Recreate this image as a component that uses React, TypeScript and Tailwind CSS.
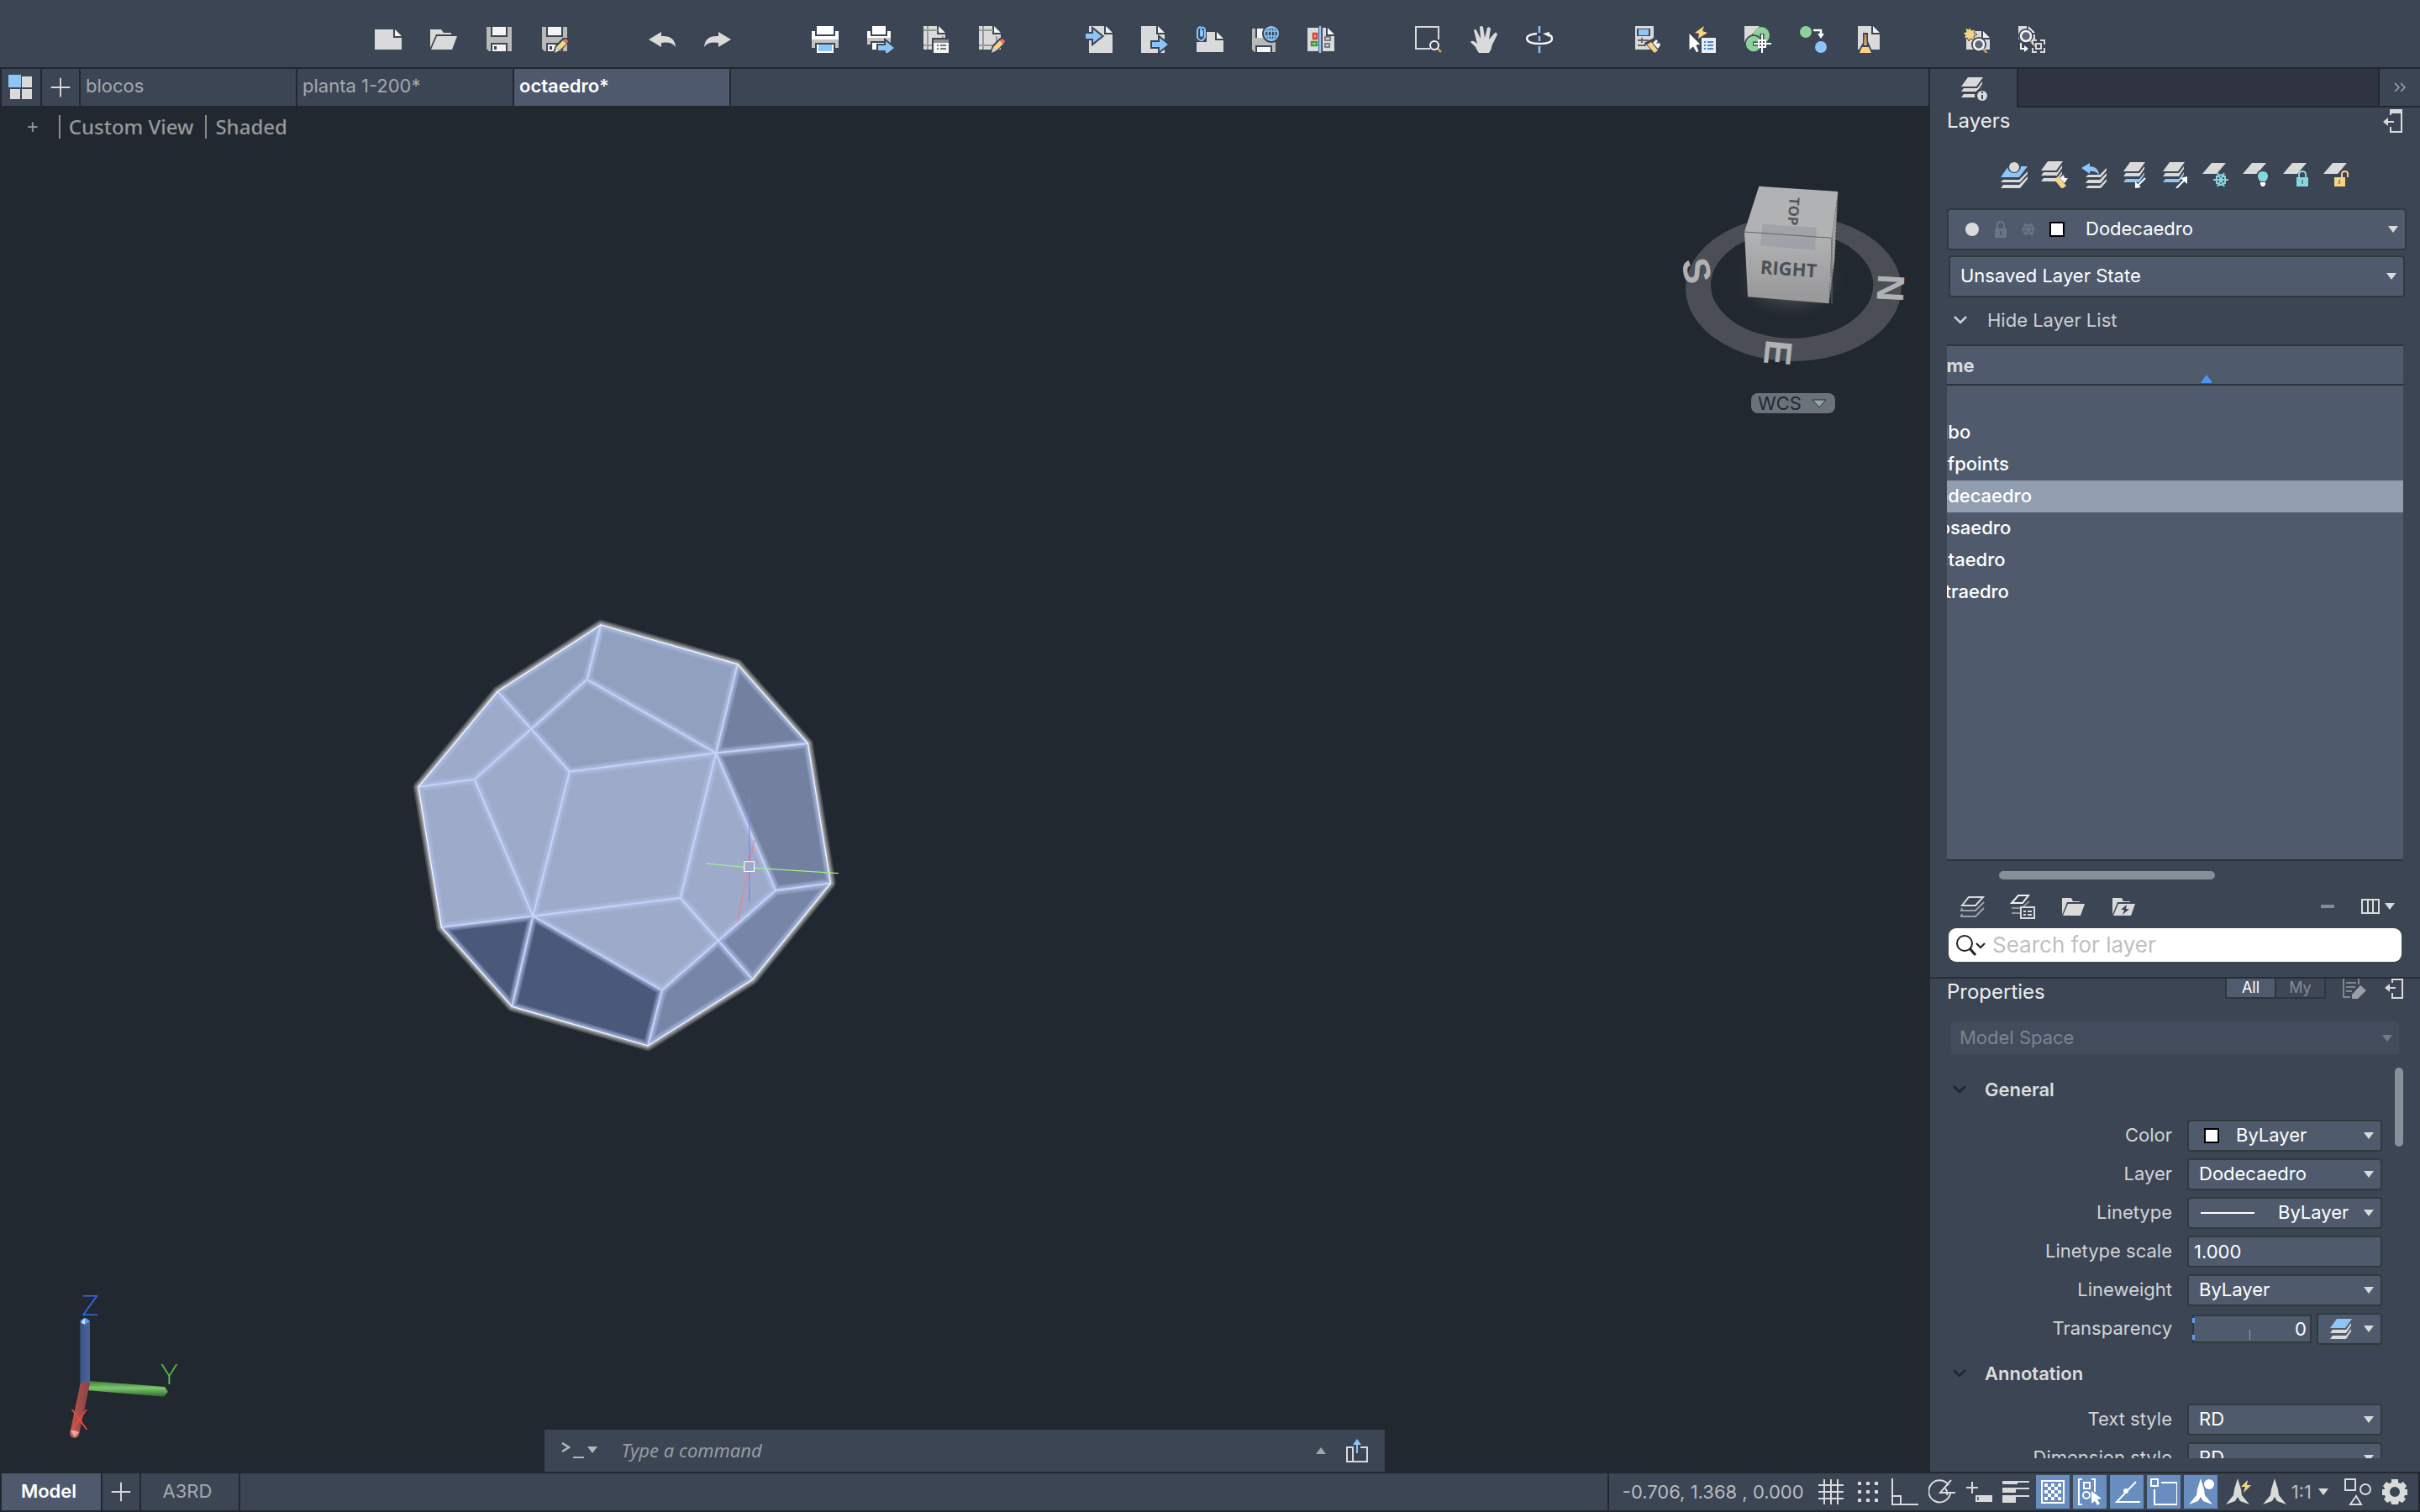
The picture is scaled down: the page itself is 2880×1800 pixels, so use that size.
import type { ReactNode } from 'react';

const GREY = '#dadada';
const BLUE = '#8cc5f8';
const YELLOW = '#f9d385';
const PANEL = '#3c4553';

function Svg({ children, size = 32 }: { children: ReactNode; size?: number }) {
  return (
    <svg width={size} height={size} viewBox="0 0 32 32" fill="none" aria-hidden="true" className="shrink-0">
      {children}
    </svg>
  );
}

function Sheet({ x = 2, y = 0, w = 26, h = 32 }: { x?: number; y?: number; w?: number; h?: number }) {
  return (
    <>
      <path d={`M${x} ${y}H${x + w - 10}V${y + 10}H${x + w}V${y + h}H${x}Z`} fill={GREY} />
      <path d={`M${x + w - 8} ${y}L${x + w} ${y + 8}H${x + w - 8}Z`} fill="#f4f4f4" />
    </>
  );
}

function Floppy() {
  return (
    <>
      <path d="M1 1H31V30H4L1 27Z" fill="#b9b9b9" />
      <path d="M6 1H26V13H6Z M6 20H26V30H6Z" fill={PANEL} />
      <path d="M8 1H24V11H8Z M8 22H24V30H8Z" fill="#f4f4f4" />
      <path d="M10 24h3v4h-3z" fill={PANEL} />
    </>
  );
}

function Pencil() {
  return (
    <>
      <path d="M14 32L17 23L26 14H32V20L22 31Z" fill={PANEL} />
      <path d="M18 25L26 17L30 21L22 29Z" fill={YELLOW} />
      <path d="M26 17L28 15.500Q30 15 31.500 17Q32.500 19 30 21Z" fill="#ec7066" />
      <path d="M18 25L22 29L16 32Z" fill={GREY} />
    </>
  );
}

function BlueArrow({ x, y }: { x: number; y: number }) {
  const d = `M${x} ${y + 5}h9v-5l10 8l-10 8v-5h-9z`;
  return (
    <>
      <path d={d} fill={PANEL} stroke={PANEL} strokeWidth="4" />
      <path d={d} fill={BLUE} />
    </>
  );
}

function Lens({ x, y }: { x: number; y: number }) {
  return (
    <>
      <circle cx={x} cy={y} r="9" fill={PANEL} />
      <path d={`M${x + 5} ${y + 5}l6 7`} stroke="#c8a06c" strokeWidth="2.500" />
      <circle cx={x} cy={y} r="6" fill="#5c6675" stroke="#f4f4f4" strokeWidth="2.500" />
    </>
  );
}

const toolbar: { label: string; icon: ReactNode }[][] = [
  [
    { label: 'New', icon: <Sheet x={0} y={4} w={32} h={24} /> },
    {
      label: 'Open',
      icon: (
        <>
          <path d="M0 4H13L16 8H25V10H7L0 26Z" fill={GREY} />
          <path d="M8 12H32L26 28H1Z" fill={GREY} />
        </>
      ),
    },
    { label: 'Save', icon: <Floppy /> },
    { label: 'Save as', icon: <><Floppy /><Pencil /></> },
  ],
  [
    { label: 'Undo', icon: <path d="M0 16L15 7V12Q31 11 32 25Q27 18 15 20V25Z" fill={GREY} /> },
    { label: 'Redo', icon: <path d="M32 16L17 7V12Q1 11 0 25Q5 18 17 20V25Z" fill={GREY} /> },
  ],
  [
    {
      label: 'Plot',
      icon: (
        <>
          <path d="M0 6H4V12H28V6H32V16H0Z" fill="#fff" />
          <path d="M0 16H32V26H28V20H4V26H0Z" fill="#c4c4c4" />
          <path d="M6 0H26V10H6Z" fill="#fff" />
          <path d="M6 22H26V32H6Z" fill="#fff" />
          <path d="M8 22H24V30H8Z" fill={BLUE} />
        </>
      ),
    },
    {
      label: 'Batch plot',
      icon: (
        <>
          <path d="M0 6H4V12H24V6H28V14H0Z" fill="#fff" />
          <path d="M0 14H28V24H24V18H4V22H0Z" fill="#c4c4c4" />
          <path d="M6 0H22V10H6Z" fill="#fff" />
          <path d="M6 20H20V28H6Z" fill="#fff" />
          <BlueArrow x={13} y={18} />
        </>
      ),
    },
    {
      label: 'Page setup',
      icon: (
        <>
          <Sheet x={1} w={26} h={28} />
          <path d="M1 5H18M1 23H14M6 0V28M24 12V16" stroke="#999" strokeWidth="2" />
          <path d="M11 14H32V32H11Z" fill={PANEL} />
          <path d="M13 16H31V32H13Z" fill="#f4f4f4" />
          <path d="M13 16H31V20H13Z" fill="#8e8e8e" />
          <path d="M17 23h2M21 23h7M17 27h2M21 27h7" stroke="#777" strokeWidth="2" />
        </>
      ),
    },
    {
      label: 'Edit sheet',
      icon: (
        <>
          <Sheet x={1} w={26} h={28} />
          <path d="M1 5H18M1 23H18M6 0V28M22 12V18" stroke="#999" strokeWidth="2" />
          <Pencil />
        </>
      ),
    },
  ],
  [
    { label: 'Import', icon: <><Sheet x={4} w={28} /><BlueArrow x={0} y={4} /></> },
    { label: 'Export', icon: <><Sheet x={0} w={28} /><BlueArrow x={13} y={14} /></> },
    {
      label: 'Attach',
      icon: (
        <>
          <Sheet x={0} y={7} w={32} h={24} />
          <path d="M0 0H12V19H0Z" fill={PANEL} />
          <path d="M7 5V11Q6 13 5 11V4Q7 -1 10 4V13Q6 21 1 14V5Q2 1 5 1" stroke={BLUE} strokeWidth="2" />
        </>
      ),
    },
    {
      label: 'Save to web',
      icon: (
        <>
          <path d="M0 3H28V31H3L0 28Z" fill="#b9b9b9" />
          <path d="M4 3H20V14H4Z M4 23H24V31H4Z" fill={PANEL} />
          <path d="M6 3H14V14H6Z M6 25H22V31H6Z" fill="#f4f4f4" />
          <circle cx="23" cy="9" r="11" fill={PANEL} />
          <circle cx="23" cy="9" r="8" stroke={BLUE} strokeWidth="2" />
          <ellipse cx="23" cy="9" rx="4" ry="8" stroke={BLUE} strokeWidth="1.500" />
          <path d="M15 6H31M15 12H31M23 1V17" stroke={BLUE} strokeWidth="1.500" />
        </>
      ),
    },
    {
      label: 'Compare',
      icon: (
        <>
          <path d="M0 2H13V30H0Z" fill={GREY} />
          <Sheet x={18} y={2} w={14} h={28} />
          <path d="M15 0V32" stroke={BLUE} strokeWidth="2.500" />
          <path d="M7 9H11V15H7Z" stroke="#e23a2e" strokeWidth="2.500" />
          <path d="M5 19H11V23H5Z" stroke="#3d9c35" strokeWidth="2.500" />
          <path d="M21 13H27V17H21ZM21 21H26V25H21Z" stroke="#7d7d7d" strokeWidth="2" />
        </>
      ),
    },
  ],
  [
    {
      label: 'Zoom window',
      icon: (
        <>
          <path d="M18 27H1V1H28V16" stroke={GREY} strokeWidth="2" />
          <path d="M26 26L31 31" stroke="#c8a06c" strokeWidth="2.500" />
          <circle cx="23" cy="23" r="5" stroke="#f4f4f4" strokeWidth="2" />
        </>
      ),
    },
    {
      label: 'Pan',
      icon: (
        <path
          d="M10 32Q7 28 6 25L0 19Q1 17 4 18L8 21L4 5Q6 3 7 5L12 15L11 1Q13 -1 15 1L17 14L20 2Q22 0 24 3L22 16L29 8Q31 7 32 10L26 22Q25 28 22 32Z"
          fill={GREY}
        />
      ),
    },
    {
      label: 'Orbit',
      icon: (
        <>
          <path d="M16 0V8M16 12V18M16 24V32" stroke={BLUE} strokeWidth="2.500" />
          <path d="M13 9Q1 10 1 15Q2 21 16 21Q31 21 31 15Q31 11 25 10" stroke="#f4f4f4" strokeWidth="2.500" />
          <path d="M20 9L28 7V13Z" fill="#f4f4f4" />
        </>
      ),
    },
  ],
  [
    {
      label: 'Match properties',
      icon: (
        <>
          <path d="M2 0H24V28H2Z" fill={GREY} />
          <path d="M4 3H20V12H4Z" fill={PANEL} />
          <path d="M6 4H18V11H6Z" fill={BLUE} />
          <path d="M5 17H18M5 23H14M10 14V20M14 20V24" stroke="#666" strokeWidth="2" />
          <path d="M13 20L24 14H32V24L24 32Z" fill={PANEL} />
          <path d="M16 22L21 19L29 29L25 32Z" fill={YELLOW} />
          <path d="M23 20L27 16L29 18L27 21L31 20L32 23L29 27Z" fill="#f4f4f4" />
        </>
      ),
    },
    {
      label: 'Quick select',
      icon: (
        <>
          <path d="M15 14H32V32H15Z" fill="#e8eef4" />
          <path d="M18 19h2M22 19h7M18 23h2M22 23h7M18 27h2M22 27h7" stroke="#3f86d6" strokeWidth="2" />
          <path d="M0 8V29L5 25L9 32L12 30L9 23L14 22Z" fill="#fff" stroke={PANEL} strokeWidth="1" />
          <path d="M18 0L7 8L12 9L11 15L22 8L16 6Z" fill={YELLOW} />
        </>
      ),
    },
    {
      label: 'Insert block',
      icon: (
        <>
          <path d="M0 0H18L0 20Z" fill={GREY} />
          <circle cx="20" cy="11" r="10" fill="#8fd19a" />
          <circle cx="11" cy="21" r="10" fill="#8fd19a" stroke={PANEL} strokeWidth="1.500" />
          <path d="M21 9V32M10 21H32" stroke={PANEL} strokeWidth="5" />
          <path d="M21 10V32M11 21H32M17 17H25V25H17Z" stroke="#fff" strokeWidth="2" />
        </>
      ),
    },
    {
      label: 'Replace block',
      icon: (
        <>
          <circle cx="7" cy="7" r="7" fill="#8fd19a" />
          <circle cx="25" cy="25" r="7" fill={BLUE} />
          <path d="M16 5H25V10" stroke="#fff" strokeWidth="2.500" />
          <path d="M21 9H29L25 15Z" fill="#fff" />
        </>
      ),
    },
    {
      label: 'Purge',
      icon: (
        <>
          <Sheet x={3} w={26} h={28} />
          <path d="M9 8H15V18L21 32H2L9 20Z" fill={PANEL} />
          <path d="M11 10H13L14 23H10Z" fill="#d2a05c" />
          <path d="M8 25H16L19 32H5Z" fill={YELLOW} />
        </>
      ),
    },
  ],
  [
    {
      label: 'Create view',
      icon: (
        <>
          <Sheet x={4} y={6} w={28} h={22} />
          <path d="M8 0L10 5L15 4L13 8L17 10L13 12L14 17L9 15L7 18L5 14L1 15L3 11L0 8L4 7L3 2L7 4Z" fill={YELLOW} stroke={PANEL} />
          <Lens x={19} y={22} />
        </>
      ),
    },
    {
      label: 'Update view',
      icon: (
        <>
          <Sheet x={0} w={20} h={16} />
          <Lens x={9} y={12} />
          <path d="M3 20V27H8" stroke="#f4f4f4" strokeWidth="2" />
          <path d="M7 23L12 27L7 31Z" fill="#f4f4f4" />
          <path d="M17 22V17H22M26 17H31V22M31 26V31H26M22 31H17V26M21 21H27V27H21Z" stroke={GREY} strokeWidth="2" />
        </>
      ),
    },
  ],
];

function Stack({ top = GREY, mid = GREY, low = GREY }: { top?: string; mid?: string; low?: string }) {
  return (
    <>
      <path d="M8 0H26L18 11H0Z" fill={top} />
      <path d="M3 13H19L25 5V8L19 17H0Z" fill={mid} />
      <path d="M3 20H19L25 12V15L19 24H0Z" fill={low} />
    </>
  );
}

const plane = <path d="M11 2H28L17 15H0Z" fill={GREY} />;

const layerTools: { label: string; icon: ReactNode }[] = [
  {
    label: 'Make current',
    icon: (
      <>
        <path d="M9 6H32L22 19H0Z" fill={BLUE} />
        <circle cx="16" cy="6" r="8" fill={PANEL} />
        <circle cx="16" cy="7" r="6" fill={GREY} />
        <path d="M3 22H22L32 12V15L23 25H0ZM3 28H22L32 18V21L23 32H0Z" fill={GREY} />
      </>
    ),
  },
  {
    label: 'Match layer',
    icon: (
      <>
        <Stack />
        <path d="M16 22L20 18L30 29L25 33Z" fill={YELLOW} />
        <path d="M22 20L27 16L28 20L32 20L28 26Z" fill="#f4f4f4" />
      </>
    ),
  },
  {
    label: 'Layer previous',
    icon: (
      <>
        <path d="M8 16H22L30 8V11L23 19H5ZM8 22H22L30 14V17L23 26H5ZM8 29H22L30 21V24L23 32H5Z" fill={GREY} />
        <path d="M0 8L10 2V6Q20 6 21 16Q16 11 10 12V15Z" fill={BLUE} />
      </>
    ),
  },
  {
    label: 'Isolate layer',
    icon: (
      <>
        <g transform="translate(2 1)"><Stack low={BLUE} /></g>
        <path d="M28 20L19 29" stroke="#fff" strokeWidth="2" />
        <path d="M16 32V24L23 31Z" fill="#fff" />
      </>
    ),
  },
  {
    label: 'Unisolate layer',
    icon: (
      <>
        <g transform="translate(1 1)"><Stack low={BLUE} /></g>
        <path d="M17 32L27 22" stroke="#fff" strokeWidth="2" />
        <path d="M30 18V27L22 20Z" fill="#fff" />
      </>
    ),
  },
  {
    label: 'Freeze layer',
    icon: (
      <>
        {plane}
        <circle cx="22" cy="22" r="9" fill={PANEL} />
        <path d="M13 22H31M18 14L26 30M26 14L18 30M17 18L22 16L27 18V26L22 28L17 26Z" stroke="#86d7e0" strokeWidth="2" />
      </>
    ),
  },
  {
    label: 'Turn layer off',
    icon: (
      <>
        {plane}
        <circle cx="24" cy="18" r="8" fill={PANEL} />
        <path d="M24 12Q30 12 30 18Q30 21 27 24H21Q18 21 18 18Q18 12 24 12Z" fill="#86d7e0" />
        <path d="M21 25H27V28L25 30H23L21 28Z" fill="#fff" />
      </>
    ),
  },
  {
    label: 'Lock layer',
    icon: (
      <>
        {plane}
        <path d="M15 15H31V31H15Z" fill={PANEL} />
        <path d="M19 20V16Q19 12 23 12Q27 12 27 16V20" stroke="#86d7e0" strokeWidth="2" />
        <path d="M16 19H30V30H16Z" fill="#86d7e0" />
        <path d="M23 22V27" stroke={PANEL} />
      </>
    ),
  },
  {
    label: 'Unlock layer',
    icon: (
      <>
        {plane}
        <path d="M12 17H27V31H12Z" fill={PANEL} />
        <path d="M22 20V15Q22 12 26 12Q29 12 29 15V19" stroke={YELLOW} strokeWidth="2" />
        <path d="M13 19H26V30H13Z" fill={YELLOW} />
        <path d="M19 22V27" stroke={PANEL} />
      </>
    ),
  },
];

const annoFigure = 'M16 0L20 13L21 20L30 31L19 27L16 22L13 27L2 31L11 20L12 13Z';

const statusTools: { label: string; on?: boolean; icon: ReactNode }[] = [
  { label: 'Grid', icon: <path d="M8 1V31M16 1V31M24 1V31M1 8H31M1 16H31M1 24H31" stroke={GREY} strokeWidth="2" /> },
  {
    label: 'Snap',
    icon: <path d="M4 6h4M14 6h4M24 6h4M4 16h4M14 16h4M24 16h4M4 26h4M14 26h4M24 26h4" stroke={GREY} strokeWidth="4" />,
  },
  { label: 'Ortho', icon: <path d="M1 0V31H32M1 21H11V31" stroke={GREY} strokeWidth="2" /> },
  {
    label: 'Polar tracking',
    icon: (
      <>
        <path d="M24 8A13 13 0 1 0 26 18" stroke={GREY} strokeWidth="2" />
        <path d="M27 2L14 17H32M20 12Q23 15 22 20" stroke={GREY} strokeWidth="2" />
      </>
    ),
  },
  {
    label: 'Dynamic input',
    icon: (
      <>
        <path d="M8 4V18M1 11H15" stroke={GREY} strokeWidth="2" />
        <path d="M12 20H32V28H12Z" fill={GREY} />
        <path d="M15 22V26" stroke={PANEL} strokeWidth="1.500" />
      </>
    ),
  },
  {
    label: 'Lineweight',
    icon: <path d="M0 3H32V5H18V7H0ZM0 11H32V13H16V17H0ZM0 20H32V22H16V29H0Z" fill={GREY} />,
  },
  {
    label: 'Transparency',
    on: true,
    icon: (
      <>
        <path d="M3 3H29V29H3Z" stroke="#fff" strokeWidth="2" />
        <path
          d="M6 8H26M10 12H26M6 16H26M10 20H26M6 24H26"
          stroke="#fff"
          strokeWidth="4"
          strokeDasharray="4 4"
        />
      </>
    ),
  },
  {
    label: 'Selection cycling',
    on: true,
    icon: (
      <>
        <path d="M7 1H3V31H7M18 1H22V16" stroke="#fff" strokeWidth="2" />
        <path d="M9 5H16V12H9Z" stroke="#fff" strokeWidth="2" />
        <circle cx="12" cy="20" r="4" stroke="#fff" strokeWidth="2" />
        <path d="M18 15V30L22 27L25 32L28 30L25 25L30 24Z" fill="#fff" />
      </>
    ),
  },
  {
    label: 'Object snap tracking',
    on: true,
    icon: (
      <>
        <path d="M27 4L4 28H32" stroke="#fff" strokeWidth="2" />
        <circle cx="15" cy="15" r="3" fill="#fff" />
      </>
    ),
  },
  {
    label: 'Object snap',
    on: true,
    icon: <path d="M1 1H9V9H1ZM13 5H32V31H5V13" stroke="#fff" strokeWidth="2" />,
  },
  {
    label: 'Annotation visibility',
    on: true,
    icon: (
      <>
        <path d={annoFigure} fill="#fff" />
        <circle cx="26" cy="7" r="6" fill="#fff" />
      </>
    ),
  },
  {
    label: 'Annotation autoscale',
    icon: (
      <>
        <path d={annoFigure} fill={GREY} />
        <path d="M28 2L20 10H25L23 17L32 8H27Z" fill={YELLOW} />
      </>
    ),
  },
  { label: 'Annotation scale', icon: <path d={annoFigure} fill={GREY} /> },
];

function Caret({ color = GREY }: { color?: string }) {
  return (
    <svg width="12" height="8" viewBox="0 0 12 8" aria-hidden="true" className="shrink-0">
      <path d="M0 0H12L6 8Z" fill={color} />
    </svg>
  );
}

function Chevron({ color }: { color: string }) {
  return (
    <svg width="16" height="10" viewBox="0 0 16 10" fill="none" aria-hidden="true" className="shrink-0">
      <path d="M1 1L8 8L15 1" stroke={color} strokeWidth="2.500" />
    </svg>
  );
}

function IconButton({ label, children, size = 32 }: { label: string; children: ReactNode; size?: number }) {
  return (
    <button type="button" aria-label={label} className="shrink-0">
      <Svg size={size}>{children}</Svg>
    </button>
  );
}

function DockIcon() {
  return (
    <svg width="24" height="28" viewBox="0 0 24 28" fill="none" aria-hidden="true">
      <path d="M9 7V1H22V27H9V21" stroke={GREY} strokeWidth="2" />
      <path d="M8 0H23V5H8Z" fill={GREY} />
      <path d="M3 15H13" stroke={GREY} strokeWidth="2" />
      <path d="M0 15L6 10V20Z" fill={GREY} />
    </svg>
  );
}

const snowPath = 'M1 10H19M5 2L15 18M15 2L5 18M4 6L10 4L16 6V14L10 16L4 14Z';

function Field({ label, id, children }: { label: string; id: string; children: ReactNode }) {
  return (
    <div className="mb-2 flex items-center">
      <label htmlFor={id} className="flex-1 pr-[18px] pb-0.5 text-right text-[#d2d4d6]">
        {label}
      </label>
      {children}
    </div>
  );
}

const combo = 'rounded border-2 border-[#2e3b3c] bg-[#4f5b6d] text-white';

function PropSelect({ label, value, lead, pad = 'pl-3' }: { label: string; value: string; lead?: ReactNode; pad?: string }) {
  const id = label.toLowerCase().replace(' ', '-');
  return (
    <Field label={label} id={id}>
      <div className={`relative h-[38px] w-[232px] ${combo}`}>
        <select id={id} defaultValue={value} className={`h-full w-full appearance-none pb-0.5 outline-none ${pad}`}>
          <option>{value}</option>
        </select>
        {lead && <span className="pointer-events-none absolute inset-y-0 left-3 flex items-center">{lead}</span>}
        <span className="pointer-events-none absolute inset-y-0 right-2 flex items-center">
          <Caret />
        </span>
      </div>
    </Field>
  );
}

function SectionHeader({ title }: { title: string }) {
  return (
    <button type="button" className="flex h-[70px] w-full items-center gap-[22px] pb-0.5 pl-1 font-semibold text-[#dcdcdc]">
      <Chevron color="#20262e" />
      {title}
    </button>
  );
}

function DocumentTabs() {
  const tabs = ['blocos', 'planta 1-200*', 'octaedro*'];
  return (
    <div className="flex h-11 gap-0.5 bg-[#222830] pl-0.5">
      <button type="button" aria-label="Start" className="flex w-[46px] items-center justify-center bg-[#3c4553]">
        <Svg>
          <path d="M1 1H16V16H1Z" fill={BLUE} />
          <path d="M17 3H29V16H17ZM3 18H15V30H3ZM17 18H29V30H17Z" fill={GREY} />
        </Svg>
      </button>
      <button type="button" aria-label="New tab" className="flex w-11 items-center justify-center bg-[#3c4553]">
        <Svg size={24}>
          <path d="M16 1V31M1 16H31" stroke={GREY} strokeWidth="2.500" />
        </Svg>
      </button>
      {tabs.map((tab, i) => (
        <button
          key={tab}
          type="button"
          className={
            i === 2
              ? 'w-64 bg-[#4e596d] pb-1 pl-1.5 text-left font-semibold text-white'
              : 'w-64 bg-[#3c4553] pb-1 pl-1.5 text-left text-[#a5a9af]'
          }
        >
          {tab}
        </button>
      ))}
      <div className="flex-1 bg-[#3c4553]" />
    </div>
  );
}

function ViewCube() {
  return (
    <div className="absolute top-[74px] right-[-5px] flex w-80 flex-col items-center">
      <svg width="320" height="268" viewBox="0 0 960 804" fill="none" aria-label="View cube">
        <defs>
          <linearGradient id="cubeFront" x1="0" y1="0" x2="0" y2="1">
            <stop offset="0" stopColor="#b2b3b4" />
            <stop offset="1" stopColor="#979798" />
          </linearGradient>
          <radialGradient id="cubeGlow">
            <stop offset="0.500" stopColor="#3c4147" />
            <stop offset="1" stopColor="#222830" stopOpacity="0" />
          </radialGradient>
        </defs>
        <path
          d="M78 430A385 260 0 0 1 848 430A385 260 0 0 1 78 430ZM168 417A290 191 0 0 0 748 417A290 191 0 0 0 168 417Z"
          fill="#4b4f55"
          fillRule="evenodd"
        />
        <ellipse cx="450" cy="400" rx="210" ry="150" fill="url(#cubeGlow)" />
        <path d="M622 84L600 250L590 484L610 330Z" fill="#a0a1a2" stroke="#3a3d40" strokeDasharray="8 5" strokeWidth="2" />
        <path d="M340 65L622 84L600 250L288 228Z" fill="#b1b2b3" />
        <path d="M288 228L600 250L590 484L300 460Z" fill="url(#cubeFront)" />
        <path d="M353 200L546 213L540 293L345 277Z" fill="#9398a2" fillOpacity="0.550" />
        <path d="M288 228L600 250V484" stroke="#63666a" strokeWidth="3" />
        <g fontFamily="Open Sans, sans-serif" fontWeight="700" textAnchor="middle">
          <text x="446" y="384" fontSize="66" fill="#4b5056" transform="rotate(4 446 360)">
            RIGHT
          </text>
          <text x="464" y="173" fontSize="50" fill="#54585e" transform="rotate(94 464 155)">
            TOP
          </text>
        </g>
        <g fontFamily="Liberation Sans, sans-serif" fontWeight="700" textAnchor="middle" fontSize="136" fill="#b0b1b2">
          <text x="120" y="415" transform="rotate(80 120 366)">S</text>
          <text x="812" y="478" transform="rotate(93 812 429)">N</text>
          <text x="410" y="709" transform="rotate(96 410 660)">E</text>
        </g>
      </svg>
      <button
        type="button"
        className="mr-3 flex h-6 w-[100px] items-center justify-between rounded-lg bg-[#6b727a] pr-2.5 pl-2 text-[22px] leading-6 text-[#222830]"
      >
        WCS
        <svg width="18" height="11" viewBox="0 0 18 11" aria-hidden="true" className="shrink-0">
          <path d="M1 1H17L9 10Z" fill="#93a5a8" stroke="#2a3036" />
        </svg>
      </button>
    </div>
  );
}

const OUTLINE = 'M686 95L1142 226L1376 490L1452 956L1192 1277L843 1498L390 1367L155 1103L78 635L342 317Z';

const faces: { d: string; fill: string }[] = [
  { d: 'M686 95L342 317L451 441L640 277Z', fill: '#90a0be' },
  { d: 'M686 95L1142 226L1070 522L640 277Z', fill: '#90a0be' },
  { d: 'M640 277L1070 522L582 584L451 441Z', fill: '#90a0be' },
  { d: 'M1142 226L1376 490L1070 522Z', fill: '#7380a0' },
  { d: 'M1070 522L1376 490L1452 956L1269 980Z', fill: '#7380a0' },
  { d: 'M155 1103L460 1066L390 1367Z', fill: '#4a587a' },
  { d: 'M460 1066L890 1313L843 1498L390 1367Z', fill: '#4a587a' },
  { d: 'M890 1313L1077 1150L1192 1277L843 1498Z', fill: '#7786a7' },
  { d: 'M1077 1150L1269 980L1452 956L1192 1277Z', fill: '#7786a7' },
];

const EDGES =
  'M686 95L640 277L1070 522M640 277L265 610L78 635M342 317L582 584L1070 522L1376 490M1142 226L1070 522L951 1005L460 1066L155 1103M582 584L460 1066L390 1367M265 610L460 1066L890 1313L843 1498M1070 522L1269 980L1452 956M1269 980L890 1313M951 1005L1192 1277';

function Dodecahedron() {
  return (
    <svg
      width="560"
      height="560"
      viewBox="0 0 1568 1568"
      fill="none"
      aria-label="Dodecahedron"
      className="absolute top-[584px] left-[470px]"
      strokeLinejoin="round"
    >
      <path d={OUTLINE} stroke="#4a4f55" strokeWidth="34" />
      <path d={OUTLINE} stroke="#74787d" strokeWidth="24" />
      <path d={OUTLINE} stroke="#9a9da1" strokeWidth="14" />
      <path d={OUTLINE} fill="#9daaca" />
      {faces.map((f) => (
        <path key={f.d} d={f.d} fill={f.fill} />
      ))}
      <clipPath id="solid">
        <path d={OUTLINE} />
      </clipPath>
      <g clipPath="url(#solid)" stroke="#b4c4ee">
        <path d={EDGES + OUTLINE} strokeOpacity="0.250" strokeWidth="32" />
        <path d={EDGES + OUTLINE} strokeOpacity="0.350" strokeWidth="22" />
        <path d={EDGES + OUTLINE} strokeOpacity="0.450" strokeWidth="12" />
        <path d={EDGES} stroke="#c6d4f8" strokeWidth="5" />
      </g>
      <path d={OUTLINE} stroke="#f2f5fc" strokeWidth="4" />
      <path d="M1181 666V1018" stroke="#7f83e6" strokeWidth="3" />
      <path d="M1198 812L1181 890L1143 1082" stroke="#ef7f7f" strokeWidth="3" />
      <path d="M1036 890L1180 904L1478 923" stroke="#98f58a" strokeWidth="3" />
      <path d="M1164 884H1197V917H1164Z" fill="#9daaca" stroke="#fff" strokeWidth="3" />
    </svg>
  );
}

function UcsIcon() {
  return (
    <svg width="240" height="200" viewBox="0 0 720 600" className="absolute bottom-8 left-0" aria-label="UCS icon">
      <defs>
        <linearGradient id="zAxis">
          <stop offset="0" stopColor="#3a5488" />
          <stop offset="1" stopColor="#48659b" />
        </linearGradient>
        <linearGradient id="yAxis" x1="0" y1="0" x2="0" y2="1">
          <stop offset="0" stopColor="#3f7a35" />
          <stop offset="0.450" stopColor="#7cc66e" />
          <stop offset="1" stopColor="#35652e" />
        </linearGradient>
        <linearGradient id="xAxis">
          <stop offset="0" stopColor="#bb5452" />
          <stop offset="1" stopColor="#8a4545" />
        </linearGradient>
      </defs>
      <path d="M316 372L588 393L600 411L585 428L316 406Z" fill="url(#yAxis)" />
      <path d="M286 160Q303 136 321 160V388H286Z" fill="url(#zAxis)" />
      <path d="M286 160Q303 136 321 160L303 170Z" fill="#5a9cf0" />
      <path d="M290 164L303 148V170Z" fill="#c8e0ff" />
      <path d="M286 385Q303 362 320 385L283 560H249Z" fill="url(#xAxis)" />
      <circle cx="266" cy="559" r="17" fill="#b25a58" />
      <path d="M252 550L266 572L282 556L266 548Z" fill="#eba5a0" />
      <g fontFamily="Lato, sans-serif" fontWeight="300" fontSize="102" textAnchor="middle">
        <text x="322" y="137" fill="#2f6bf0">Z</text>
        <text x="604" y="384" fill="#5fc243">Y</text>
        <text x="282" y="546" fill="#f04a38">X</text>
      </g>
    </svg>
  );
}

function CommandLine() {
  return (
    <div className="absolute bottom-0 left-1/2 flex h-[50px] w-[1000px] -translate-x-1/2 items-center bg-[#3c4553] pr-5 pl-5">
      <button type="button" aria-label="Recent commands" className="shrink-0">
        <svg width="44" height="20" viewBox="0 0 44 20" fill="none" aria-hidden="true">
          <path d="M1 1L9 6L1 11" stroke="#b4b6b8" strokeWidth="2.500" />
          <path d="M14 18H27" stroke="#b4b6b8" strokeWidth="2" />
          <path d="M31 5H43L37 13Z" fill="#b4b6b8" />
        </svg>
      </button>
      <input
        aria-label="Command"
        placeholder="Type a command"
        className="ml-7 min-w-0 flex-1 bg-transparent pb-0.5 font-['Noto_Sans',sans-serif] text-[22px] text-white italic outline-none placeholder:text-[#979ca3]"
      />
      <button type="button" aria-label="Expand history" className="mr-6 rotate-180">
        <Caret color="#a3a5a8" />
      </button>
      <button type="button" aria-label="Share">
        <svg width="26" height="28" viewBox="0 0 26 28" fill="none" aria-hidden="true">
          <path d="M9 10H1V27H25V10H17M8 10V26" stroke={GREY} strokeWidth="2" />
          <path d="M13 4V17" stroke={BLUE} strokeWidth="2" />
          <path d="M8 7L13 0L18 7Z" fill={BLUE} />
        </svg>
      </button>
    </div>
  );
}

function LayersPanel() {
  const layers = ['Cubo', 'Defpoints', 'Dodecaedro', 'Icosaedro', 'Octaedro', 'Tetraedro'];
  return (
    <section aria-label="Layers" className="flex min-h-0 flex-1 flex-col px-5 pb-[18px]">
      <div className="flex h-8 shrink-0 items-center justify-between">
        <h2 className="text-2xl text-[#eceded]">Layers</h2>
        <button type="button" aria-label="Dock layers">
          <DockIcon />
        </button>
      </div>

      <div className="mt-8 flex justify-center gap-4">
        {layerTools.map((t) => (
          <IconButton key={t.label} label={t.label}>
            {t.icon}
          </IconButton>
        ))}
      </div>

      <div className={`relative mt-6 -mr-1 h-[50px] shrink-0 ${combo}`}>
        <select
          aria-label="Current layer"
          defaultValue="Dodecaedro"
          className="h-full w-full appearance-none pb-0.5 pl-[163px] outline-none"
        >
          <option>Dodecaedro</option>
        </select>
        <span className="pointer-events-none absolute inset-y-0 left-5 flex items-center">
          <span className="h-4 w-4 rounded-full bg-[#dadada]" />
          <svg width="16" height="20" viewBox="0 0 16 20" fill="none" className="ml-[18px]">
            <path d="M4 10V5Q4 1 8 1Q12 1 12 5V10" stroke="#6b7585" strokeWidth="2" />
            <path d="M1 9H15V20H1Z" fill="#6b7585" />
            <path d="M8 12V17" stroke="#4f5b6d" strokeWidth="2" />
          </svg>
          <svg width="18" height="18" viewBox="0 0 20 20" fill="none" className="ml-4">
            <path d={snowPath} stroke="#6b7585" strokeWidth="2" />
          </svg>
          <span className="ml-4 h-[18px] w-[18px] border-2 border-black bg-white" />
        </span>
        <span className="pointer-events-none absolute inset-y-0 right-2 flex items-center">
          <Caret />
        </span>
      </div>

      <div className={`relative mt-1.5 -mr-0.5 ml-0.5 h-[50px] shrink-0 ${combo}`}>
        <select
          aria-label="Layer state"
          defaultValue="Unsaved Layer State"
          className="h-full w-full appearance-none pb-0.5 pl-3 outline-none"
        >
          <option>Unsaved Layer State</option>
        </select>
        <span className="pointer-events-none absolute inset-y-0 right-2 flex items-center">
          <Caret />
        </span>
      </div>

      <button type="button" className="flex h-14 shrink-0 items-center gap-6 pb-0.5 pl-2 text-[#ccced1]">
        <Chevron color="#ccced1" />
        Hide Layer List
      </button>

      <div className="relative min-h-0 flex-1 overflow-hidden border-y-2 border-[#2b323c] bg-[#4f5b6d]">
        {/* list is scrolled sideways, so the start of each name is out of view */}
        <div className="-ml-[30px]">
          <table className="w-full border-collapse text-left text-white">
            <thead>
              <tr className="h-[46px] border-b-2 border-[#2b323c]">
                <th className="p-0 font-bold text-[#d8dade]">Name</th>
              </tr>
            </thead>
            <tbody>
              <tr className="h-[38px]">
                <td className="p-0" />
              </tr>
              {layers.map((name) => (
                <tr key={name} className={name === 'Dodecaedro' ? 'h-[38px] bg-[#919eb0]' : 'h-[38px]'}>
                  <td className="p-0 pb-0.5 pl-0.5 font-medium">{name}</td>
                </tr>
              ))}
            </tbody>
          </table>
        </div>
        <svg width="12" height="10" viewBox="0 0 12 10" className="absolute top-[34px] left-[303px]" aria-hidden="true">
          <path d="M0 10V8L6 0L12 8V10Z" fill="#4c97ec" />
        </svg>
      </div>

      <div className="mt-3 ml-[62px] h-2.5 w-[257px] shrink-0 rounded-full bg-[#868e99]" />

      <div className="mt-4 flex shrink-0 items-center pr-2.5 pl-[14px]">
        <IconButton label="New layer">
          <path d="M12 5H29L20 15H4Z" stroke={GREY} strokeWidth="2" />
          <path d="M4 18L3 21H20L30 11M4 25L3 28H20L30 18" stroke="#9da2aa" strokeWidth="2" />
        </IconButton>
        <span className="w-7" />
        <IconButton label="Layer settings">
          <path d="M11 3H23L16 12H3Z" stroke="#f2f2f2" strokeWidth="2" />
          <path d="M3 18H15L24 10M3 24H13" stroke="#8f959e" strokeWidth="2" />
          <path d="M14 17H30V30H14Z" fill={PANEL} stroke={GREY} strokeWidth="2" />
          <path d="M17 22h3M22 22h5M17 26h3M22 26h5" stroke={GREY} strokeWidth="2" />
        </IconButton>
        <span className="w-7" />
        <IconButton label="New group">
          <path d="M3 6H14L16 10H24V11H9L3 26Z" fill={GREY} />
          <path d="M10 13H30L25 27H4Z" fill={GREY} />
        </IconButton>
        <span className="w-7" />
        <IconButton label="New filter">
          <path d="M3 6H14L16 10H24V11H9L3 26Z" fill={GREY} />
          <path d="M10 13H30L25 27H4Z" fill={GREY} />
          <path d="M20 14L13 20H17L15 26L23 19H19Z" fill={PANEL} />
        </IconButton>
        <span className="flex-1" />
        <button type="button" aria-label="Delete layer" className="mr-8 h-1 w-4 bg-[#858b95]" />
        <button type="button" aria-label="Columns" className="flex items-center gap-1.5">
          <svg width="22" height="18" viewBox="0 0 22 18" fill="none" aria-hidden="true">
            <path d="M1 1H21V17H1ZM8 1V17M14 1V17" stroke={GREY} strokeWidth="2" />
          </svg>
          <Caret />
        </button>
      </div>

      <div className="mx-0.5 mt-2.5 flex h-10 shrink-0 items-center rounded-[9px] bg-white pl-2">
        <svg width="36" height="26" viewBox="0 0 36 26" fill="none" aria-hidden="true">
          <circle cx="11" cy="11" r="9" stroke="#222" strokeWidth="2" />
          <path d="M17 17L24 25" stroke="#222" strokeWidth="3" />
          <path d="M25 11L30 16L35 11" stroke="#222" strokeWidth="2" />
        </svg>
        <input
          type="search"
          aria-label="Search for layer"
          placeholder="Search for layer"
          className="ml-2 min-w-0 flex-1 text-[26px] text-black outline-none placeholder:text-[#bfbfbf]"
        />
      </div>
    </section>
  );
}

function PropertiesPanel() {
  return (
    <section aria-label="Properties" className="flex h-[589px] shrink-0 flex-col border-t-2 border-[#262d36] px-5 pb-4">
      <div className="flex h-8 shrink-0 items-start">
        <h2 className="flex-1 text-2xl leading-8 text-[#eceded]">Properties</h2>
        <div className="flex h-6 w-[120px] gap-0.5 bg-[#2f3640] px-0.5 pb-0.5 text-lg leading-5">
          <button type="button" className="flex-1 bg-[#4f5b6f] text-white">
            All
          </button>
          <button type="button" className="flex-1 bg-[#3f4755] text-[#868c96]">
            My
          </button>
        </div>
        <button type="button" aria-label="Customize properties" className="ml-5">
          <svg width="28" height="24" viewBox="0 0 28 24" fill="none" aria-hidden="true">
            <path d="M1 0V22H9M19 0V7M4 5H16M4 10H15M4 15H11" stroke="#808690" strokeWidth="2" />
            <path d="M11 24V19L21 8L28 14L18 24Z" fill="#9a9fa7" />
          </svg>
        </button>
        <button type="button" aria-label="Dock properties" className="ml-[22px] h-6 overflow-hidden">
          <svg width="22" height="24" viewBox="0 0 22 24" fill="none" aria-hidden="true">
            <path d="M9 5V1H21V23H9V17" stroke={GREY} strokeWidth="2" />
            <path d="M3 11H13" stroke={GREY} strokeWidth="2" />
            <path d="M0 11L6 6V16Z" fill={GREY} />
          </svg>
        </button>
      </div>

      <div className="relative mt-[17px] mr-[3px] ml-[3px] h-[43px] shrink-0 rounded border-2 border-[#3b4650] bg-[#434c5c]">
        <select
          disabled
          aria-label="Object type"
          defaultValue="Model Space"
          className="h-full w-full appearance-none pb-0.5 pl-2.5 text-[#7d8490] opacity-100"
        >
          <option>Model Space</option>
        </select>
        <span className="pointer-events-none absolute inset-y-0 right-2 flex items-center">
          <Caret color="#737b87" />
        </span>
      </div>

      <div className="mt-1.5 flex min-h-0 flex-1 overflow-hidden">
        <div className="min-w-0 flex-1 pl-[3px]">
          <SectionHeader title="General" />
          <PropSelect
            label="Color"
            value="ByLayer"
            pad="pl-14"
            lead={<span className="ml-1.5 h-[18px] w-[18px] border-2 border-black bg-white" />}
          />
          <PropSelect label="Layer" value="Dodecaedro" />
          <PropSelect
            label="Linetype"
            value="ByLayer"
            pad="pl-[106px]"
            lead={<span className="ml-0.5 h-0.5 w-16 bg-white" />}
          />
          <Field label="Linetype scale" id="linetype-scale">
            <input id="linetype-scale" defaultValue="1.000" className={`h-[38px] w-[232px] pl-1.5 outline-none ${combo}`} />
          </Field>
          <PropSelect label="Lineweight" value="ByLayer" />
          <div className="flex items-center">
            <label htmlFor="transparency" className="flex-1 pr-[18px] pb-0.5 text-right text-[#d2d4d6]">
              Transparency
            </label>
            <div className="flex h-[38px] w-[232px] items-center justify-between pl-1.5">
              <div className="relative h-[34px] w-[142px]">
                <input
                  id="transparency"
                  defaultValue="0"
                  className="h-full w-full border-2 border-[#2e3b3c] bg-[#4f5b6d] pr-1 text-right text-white outline-none"
                />
                <span className="absolute top-1 left-0 h-1.5 w-[3px] bg-[#5c9df5]" />
                <span className="absolute bottom-1 left-0 h-1.5 w-[3px] bg-[#5c9df5]" />
                <span className="absolute bottom-1 left-[68px] h-3 w-px bg-[#9aa3af]" />
              </div>
              <button
                type="button"
                aria-label="Transparency source"
                className={`flex h-[38px] w-[78px] items-center justify-between pr-2 pl-3.5 ${combo}`}
              >
                <svg width="26" height="24" viewBox="0 0 26 24" aria-hidden="true">
                  <Stack top={BLUE} />
                </svg>
                <Caret />
              </button>
            </div>
          </div>
          <SectionHeader title="Annotation" />
          <PropSelect label="Text style" value="RD" />
          <PropSelect label="Dimension style" value="RD" />
        </div>
        <div className="ml-[15px] pt-2">
          <div className="h-[94px] w-2.5 rounded-full bg-[#8a909a]" />
        </div>
      </div>
    </section>
  );
}

function StatusBar() {
  return (
    <footer className="flex h-12 shrink-0 gap-0.5 border-2 border-[#222830] bg-[#222830]">
      <button type="button" className="w-[118px] bg-[#4e596d] pr-1.5 pb-0.5 font-semibold text-white">
        Model
      </button>
      <button type="button" aria-label="New layout" className="flex w-11 items-center justify-center bg-[#3c4553]">
        <Svg size={24}>
          <path d="M16 1V31M1 16H31" stroke={GREY} strokeWidth="2.500" />
        </Svg>
      </button>
      <button type="button" className="w-[116px] bg-[#3c4553] pr-1.5 pb-0.5 text-[#a5a9af]">
        A3RD
      </button>
      <div className="flex-1 bg-[#3c4553]" />
      <div className="flex items-center bg-[#3c4553] pr-3 pl-4">
        <span className="w-[228px] whitespace-nowrap text-[#b9bcc1]">-0.706, 1.368 , 0.000</span>
        <div className="flex gap-1">
          {statusTools.map((t) => (
            <button
              key={t.label}
              type="button"
              aria-label={t.label}
              aria-pressed={!!t.on}
              className={
                t.on
                  ? 'flex h-10 w-10 items-center justify-center bg-[#688dbf]'
                  : 'flex h-10 w-10 items-center justify-center'
              }
            >
              <Svg>{t.icon}</Svg>
            </button>
          ))}
        </div>
        <button type="button" className="flex items-center gap-2 pr-[19px] text-[#b9bcc1]">
          1:1
          <Caret />
        </button>
        <IconButton label="Isolate objects">
          <path d="M1 1H13V14H1ZM14 21L20 31H7Z" stroke={GREY} strokeWidth="2" />
          <circle cx="25" cy="13" r="6" stroke={GREY} strokeWidth="2" />
        </IconButton>
        <span className="w-3" />
        <IconButton label="Customize status bar">
          <path
            d="M12 1H20V5L23 6L26 4L30 9L28 12V13H31V20H28L27 22L29 25L25 29L21 27L20 31H12L11 27L7 29L3 25L5 22L4 20H1V13H4V12L2 9L6 4L9 6L12 5ZM16 10A6 6 0 1 0 16 22A6 6 0 1 0 16 10Z"
            fill={GREY}
            fillRule="evenodd"
          />
        </IconButton>
      </div>
    </footer>
  );
}

export default function App() {
  return (
    <div className="flex h-screen flex-col overflow-hidden bg-[#222830] font-['Inter',sans-serif] text-[22px] leading-7">
      <header className="flex h-[82px] shrink-0 items-center justify-center gap-24 border-b-2 border-[#222830] bg-[#3c4553] pt-3.5">
        {toolbar.map((group) => (
          <div key={group[0].label} className="flex gap-[34px]">
            {group.map((t) => (
              <IconButton key={t.label} label={t.label}>
                {t.icon}
              </IconButton>
            ))}
          </div>
        ))}
      </header>

      <div className="flex min-h-0 flex-1">
        <div className="flex min-w-0 flex-1 flex-col">
          <DocumentTabs />
          <main className="relative min-h-0 flex-1 bg-[#222830]">
            <div className="flex h-[50px] items-center pl-8 font-['Noto_Sans',sans-serif] text-2xl font-medium text-[#989999]">
              <button type="button" className="font-normal">
                +
              </button>
              <span className="mr-2.5 ml-6 h-7 w-0.5 bg-[#8b8c8c]" />
              <button type="button">Custom View</button>
              <span className="mr-2.5 ml-3.5 h-7 w-0.5 bg-[#8b8c8c]" />
              <button type="button">Shaded</button>
            </div>
            <Dodecahedron />
            <ViewCube />
            <UcsIcon />
            <CommandLine />
          </main>
        </div>

        <aside className="ml-0.5 flex w-[583px] shrink-0 flex-col bg-[#3c4553]">
          <div className="flex h-[46px] shrink-0">
            <button type="button" aria-label="Layers tab" className="flex w-[103px] items-center justify-center">
              <Svg>
                <g transform="translate(1 3)">
                  <Stack />
                  <circle cx="25" cy="22" r="9" fill={PANEL} />
                  <circle cx="25" cy="22" r="6" fill={GREY} />
                  <path d="M25 17V19M25 21V26" stroke={PANEL} strokeWidth="2" />
                </g>
              </Svg>
            </button>
            <div className="flex-1 border-x-2 border-b-2 border-[#222830] bg-[#303440]" />
            <button type="button" aria-label="More panels" className="flex w-12 items-center justify-center border-b-2 border-[#222830]">
              <svg width="14" height="10" viewBox="0 0 14 10" fill="none" aria-hidden="true">
                <path d="M1 0L6 5L1 10M8 0L13 5L8 10" stroke="#a3a7ad" strokeWidth="1.500" />
              </svg>
            </button>
          </div>
          <LayersPanel />
          <PropertiesPanel />
        </aside>
      </div>

      <StatusBar />
    </div>
  );
}
